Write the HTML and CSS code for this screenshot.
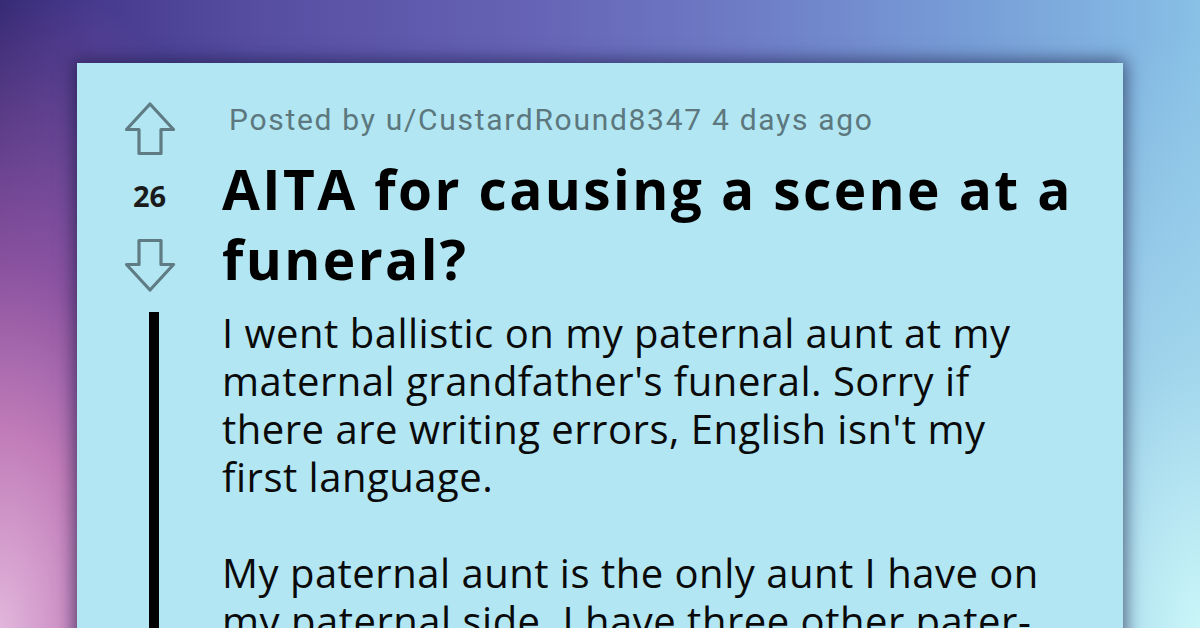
FILE: index.html
```html
<!DOCTYPE html>
<html lang="en">
<head>
<meta charset="utf-8">
<title>AITA for causing a scene at a funeral?</title>
<link rel="stylesheet" href="styles.css">
</head>
<body>
<div class="page">
  <article class="card">
    <div class="vote">
      <svg class="arrow up" width="52" height="54" viewBox="0 0 52 54" aria-hidden="true">
        <path d="M26 2 L49.5 27.5 L37 27.5 L37 51.5 L15 51.5 L15 27.5 L2.5 27.5 Z" fill="none" stroke="#5f7c84" stroke-width="3.2" stroke-linejoin="round"/>
      </svg>
      <span class="count">26</span>
      <svg class="arrow down" width="52" height="54" viewBox="0 0 52 54" aria-hidden="true">
        <path d="M26 52 L49.5 26.5 L37 26.5 L37 2.5 L15 2.5 L15 26.5 L2.5 26.5 Z" fill="none" stroke="#5f7c84" stroke-width="3.2" stroke-linejoin="round"/>
      </svg>
    </div>
    <header class="head">
      <p class="meta">Posted by u/CustardRound8347 4 days ago</p>
      <h1 class="title">AITA for causing a scene at a funeral?</h1>
    </header>
    <div class="rail"><div class="bar"></div></div>
    <div class="text">
      <p>I went ballistic on my paternal aunt at my maternal grandfather's funeral. Sorry if there are writing errors, English isn't my first language.</p>
      <p>My paternal aunt is the only aunt I have on my paternal side. I have three other pater-nal uncles and my father is the youngest of them all.</p>
    </div>
  </article>
</div>
</body>
</html>
```
FILE: styles.css
```css
html, body {
  margin: 0;
  padding: 0;
}
body {
  width: 1200px;
  height: 628px;
  overflow: hidden;
  background:
    radial-gradient(ellipse 330px 660px at 0% 100%, rgba(226,182,220,1) 0%, rgba(200,128,188,0.95) 30%, rgba(160,92,170,0.8) 55%, rgba(110,62,150,0) 100%),
    radial-gradient(ellipse 320px 600px at 100% 100%, rgba(202,246,248,1) 0%, rgba(168,220,238,0.75) 45%, rgba(140,196,232,0) 100%),
    linear-gradient(to right, #2c2670 0%, #463a8e 8%, #574ea2 22%, #6664b6 45%, #6e7cc6 62%, #78a0d8 82%, #88c0e6 100%);
  font-family: "Open Sans", "Noto Sans", sans-serif;
}
.page {
  height: 628px;
  padding: 63px 77px 0 77px;
  box-sizing: border-box;
}
.card {
  background: #b2e6f2;
  height: 700px;
  box-shadow: 0 0 16px 3px rgba(20, 22, 60, 0.6);
  display: grid;
  grid-template-columns: 145px 1fr;
  grid-template-rows: auto 1fr;
  padding-top: 39px;
  box-sizing: border-box;
}
.vote {
  display: flex;
  flex-direction: column;
  align-items: center;
}
.arrow {
  display: block;
}
.count {
  display: block;
  margin-top: 25px;
  font-family: "Open Sans", sans-serif;
  font-weight: 700;
  font-size: 29px;
  line-height: 30px;
  color: #1b1b1b;
}
.arrow.down {
  margin-top: 27px;
}
.head {
  padding-right: 20px;
}
.meta {
  margin: 0;
  font-family: Roboto, "Liberation Sans", sans-serif;
  font-size: 30px;
  line-height: 36px;
  letter-spacing: 1.7px;
  color: #5c787e;
  padding-left: 7px;
}
.title {
  margin: 16px 0 0 0;
  font-family: "Open Sans", sans-serif;
  font-weight: 700;
  font-size: 55px;
  line-height: 70px;
  letter-spacing: 2.4px;
  color: #000;
}
.rail {
  display: flex;
  justify-content: center;
  padding-top: 18px;
  padding-left: 8px;
}
.bar {
  width: 10px;
  background: #000;
}
.text {
  padding-top: 15px;
  max-width: 830px;
}
.text p {
  margin: 0 0 48px 0;
  font-size: 40px;
  line-height: 48px;
  letter-spacing: 0.5px;
  color: #0a0a0a;
}
```
